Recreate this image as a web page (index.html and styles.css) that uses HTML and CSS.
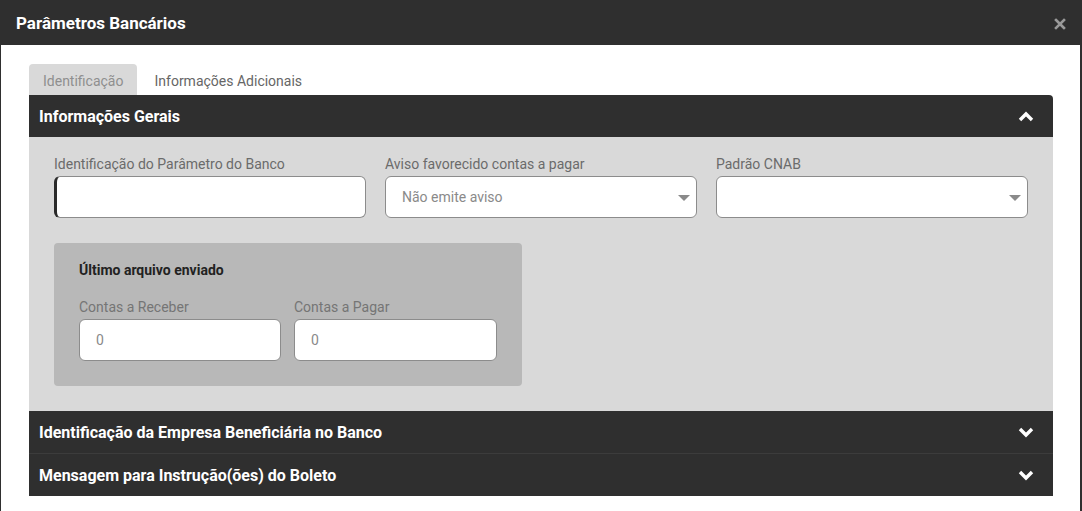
FILE: index.html
```html
<!DOCTYPE html>
<html lang="pt">
<head>
<meta charset="utf-8">
<title>Parâmetros Bancários</title>
<link rel="stylesheet" href="styles.css">
</head>
<body>
<div class="modal">
  <header class="modal-header">
    <h1 class="modal-title">Parâmetros Bancários</h1>
    <button class="close" aria-label="Fechar">
      <svg width="12" height="12" viewBox="0 0 12 12"><path d="M2 2 L10 10 M10 2 L2 10" stroke="#9a9a9a" stroke-width="2.6" stroke-linecap="square"/></svg>
    </button>
  </header>
  <div class="modal-body">
    <nav class="tabs">
      <span class="tab active">Identificação</span>
      <span class="tab">Informações Adicionais</span>
    </nav>
    <section class="acc first">
      <div class="acc-head">
        <span>Informações Gerais</span>
        <svg class="chev" width="16" height="11" viewBox="0 0 16 11"><path d="M2 9 L8 3 L14 9" fill="none" stroke="#fff" stroke-width="3.4"/></svg>
      </div>
      <div class="acc-panel">
        <div class="row3">
          <div class="field">
            <label class="lbl">Identificação do Parâmetro do Banco</label>
            <div class="input focus"></div>
          </div>
          <div class="field">
            <label class="lbl">Aviso favorecido contas a pagar</label>
            <div class="input select"><span class="ph">Não emite aviso</span><span class="caret"></span></div>
          </div>
          <div class="field">
            <label class="lbl">Padrão CNAB</label>
            <div class="input select"><span class="ph"></span><span class="caret"></span></div>
          </div>
        </div>
        <div class="box">
          <div class="box-title">Último arquivo enviado</div>
          <div class="row2">
            <div class="field">
              <label class="lbl">Contas a Receber</label>
              <div class="input"><span class="ph">0</span></div>
            </div>
            <div class="field">
              <label class="lbl">Contas a Pagar</label>
              <div class="input"><span class="ph">0</span></div>
            </div>
          </div>
        </div>
      </div>
    </section>
    <section class="acc">
      <div class="acc-head sep">
        <span>Identificação da Empresa Beneficiária no Banco</span>
        <svg class="chev" width="16" height="11" viewBox="0 0 16 11"><path d="M2 2 L8 8 L14 2" fill="none" stroke="#fff" stroke-width="3.4"/></svg>
      </div>
    </section>
    <section class="acc">
      <div class="acc-head">
        <span>Mensagem para Instrução(ões) do Boleto</span>
        <svg class="chev" width="16" height="11" viewBox="0 0 16 11"><path d="M2 2 L8 8 L14 2" fill="none" stroke="#fff" stroke-width="3.4"/></svg>
      </div>
    </section>
  </div>
</div>
</body>
</html>
```

FILE: styles.css
```css
* { box-sizing: border-box; }
html, body { margin: 0; padding: 0; }
body {
  background: #2f2f2f;
  font-family: Roboto, "Liberation Sans", Arial, sans-serif;
  width: 1082px;
  height: 511px;
  overflow: hidden;
}
.modal {
  margin: 0 2px 0 1px;
  height: 511px;
  background: #fff;
}
.modal-header {
  height: 45px;
  background: #2f2f2f;
  margin: 0 -2px 0 -1px;
  display: flex;
  align-items: center;
  justify-content: space-between;
  padding: 0 16px 0 16px;
}
.modal-title {
  margin: 0;
  color: #fff;
  font-size: 17px;
  font-weight: 700;
  line-height: 20px;
}
.close {
  background: none;
  border: 0;
  padding: 0;
  display: flex;
  margin-top: 3px;
}
.modal-body {
  padding: 19px 27px 0 28px;
}
.tabs {
  display: flex;
  height: 31px;
}
.tab {
  padding: 3px 14px 0;
  line-height: 28px;
  font-size: 14px;
  color: #666;
}
.tab.active {
  background: #d9d9d9;
  color: #8f8f8f;
  border-radius: 4px 4px 0 0;
  margin-right: 3px;
}
.acc-head {
  height: 42px;
  background: #2f2f2f;
  color: #fff;
  font-weight: 700;
  font-size: 16px;
  display: flex;
  align-items: center;
  justify-content: space-between;
  padding: 0 19px 0 10px;
}
.acc.first .acc-head { border-radius: 0 4px 0 0; }
.acc-head.sep { border-bottom: 1px solid #3c3c3c; height: 43px; }
.chev { display: block; }
.acc-panel {
  background: #d9d9d9;
  padding: 18px 25px 25px;
}
.row3 {
  display: grid;
  grid-template-columns: 312px 312px 312px;
  column-gap: 19px;
}
.row2 {
  display: grid;
  grid-template-columns: 202px 203px;
  column-gap: 13px;
}
.field { display: flex; flex-direction: column; }
.lbl {
  font-size: 14px;
  line-height: 18px;
  color: #6b6b6b;
  margin-bottom: 3px;
}
.input {
  height: 42px;
  background: #fff;
  border: 1px solid #8c8c8c;
  border-radius: 6px;
  display: flex;
  align-items: center;
  justify-content: space-between;
  padding: 0 6px 0 16px;
}
.input.focus {
  border-left: 3px solid #2a2a2a;
}
.ph {
  font-size: 14px;
  color: #8a8a8a;
}
.caret {
  width: 0;
  height: 0;
  border-left: 6px solid transparent;
  border-right: 6px solid transparent;
  border-top: 6px solid #8a8a8a;
  margin-top: 1px;
}
.box {
  margin-top: 25px;
  width: 468px;
  background: #b8b8b8;
  border-radius: 4px;
  padding: 19px 25px 25px;
}
.box-title {
  font-size: 14px;
  font-weight: 700;
  color: #222;
  line-height: 17px;
  margin-bottom: 19px;
}
.box .lbl { color: #757575; }
```
